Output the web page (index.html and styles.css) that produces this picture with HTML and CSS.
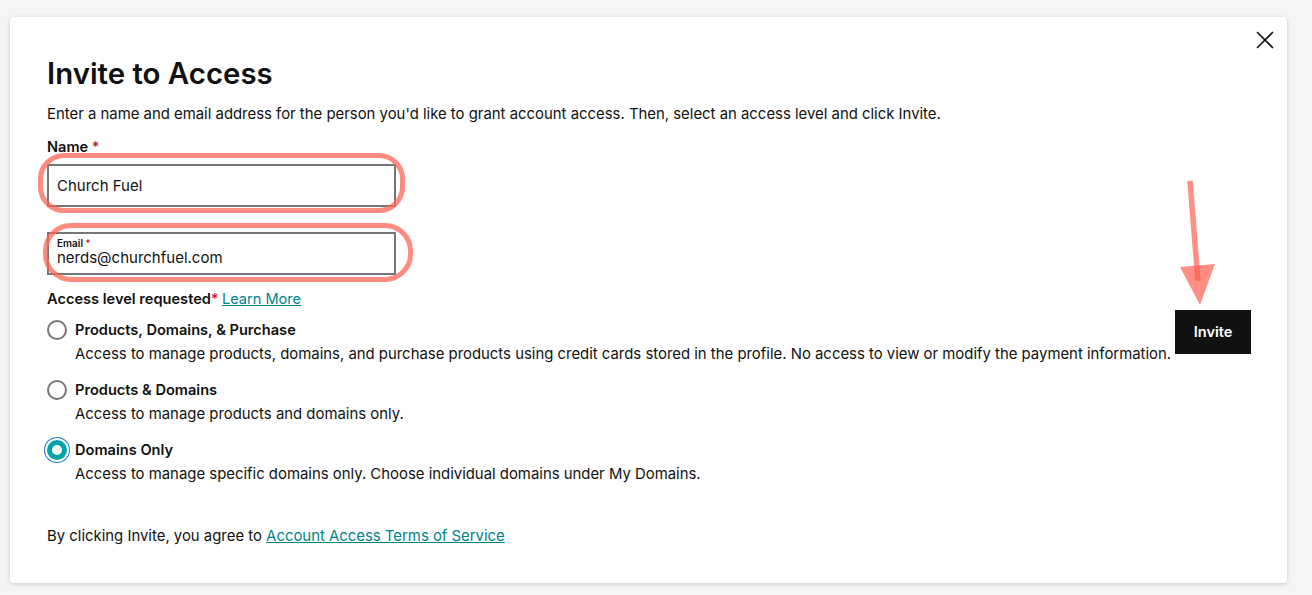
FILE: index.html
```html
<!DOCTYPE html>
<html>
<head>
<meta charset="utf-8">
<link rel="stylesheet" href="styles.css">
</head>
<body>
<div class="page">
  <div class="modal">
    <button class="close" aria-label="Close">
      <svg width="18" height="18" viewBox="0 0 18 18"><path d="M1 1L17 17M17 1L1 17" stroke="#111" stroke-width="1.6" fill="none"/></svg>
    </button>
    <h1 class="title">Invite to Access</h1>
    <p class="intro">Enter a name and email address for the person you'd like to grant account access. Then, select an access level and click Invite.</p>
    <div class="field-label">Name <span class="req">*</span></div>
    <div class="input-wrap">
      <div class="input"><span class="value">Church Fuel</span></div>
      <div class="oval oval-name"></div>
    </div>
    <div class="input-wrap email-wrap">
      <div class="input input-email">
        <span class="float-label">Email <span class="req">*</span></span>
        <span class="value">nerds@churchfuel.com</span>
      </div>
      <div class="oval oval-email"></div>
    </div>
    <div class="access-label">Access level requested<span class="req">*</span> <a class="link" href="#">Learn More</a></div>
    <div class="access-row">
      <div class="options">
        <div class="option">
          <span class="radio"></span>
          <div class="opt-text">
            <div class="opt-title">Products, Domains, &amp; Purchase</div>
            <div class="opt-desc">Access to manage products, domains, and purchase products using credit cards stored in the profile. No access to view or modify the payment information.</div>
          </div>
        </div>
        <div class="option">
          <span class="radio"></span>
          <div class="opt-text">
            <div class="opt-title">Products &amp; Domains</div>
            <div class="opt-desc">Access to manage products and domains only.</div>
          </div>
        </div>
        <div class="option">
          <span class="radio checked"></span>
          <div class="opt-text">
            <div class="opt-title">Domains Only</div>
            <div class="opt-desc">Access to manage specific domains only. Choose individual domains under My Domains.</div>
          </div>
        </div>
      </div>
      <div class="btn-col">
        <button class="invite">Invite</button>
        <svg class="arrow" width="50" height="130" viewBox="0 0 50 130"><line x1="10" y1="1" x2="18" y2="101" stroke="rgba(255,90,75,0.68)" stroke-width="5.5"/><polygon points="0,87 35,84 20,125" fill="rgba(255,90,75,0.68)"/></svg>
      </div>
    </div>
    <p class="terms">By clicking Invite, you agree to <a class="link" href="#">Account Access Terms of Service</a></p>
  </div>
</div>
</body>
</html>
```
FILE: styles.css
```css
* { box-sizing: border-box; }
html, body { margin: 0; padding: 0; }
body {
  background: #f5f5f5;
  font-family: "Inter", "Liberation Sans", sans-serif;
  color: #111;
  width: 1312px;
  height: 595px;
  overflow: hidden;
}
.page { padding: 17px 25px 0 10px; }
.modal {
  position: relative;
  background: #fff;
  border-radius: 4px;
  box-shadow: 0 1px 4px rgba(0,0,0,0.18);
  height: 566px;
  padding: 39px 37px 0 37px;
}
.close {
  position: absolute;
  top: 14px;
  right: 13px;
  background: none;
  border: 0;
  padding: 0;
  width: 18px;
  height: 18px;
}
.title {
  margin: 0;
  font-size: 29.4px;
  font-weight: 600;
  line-height: 36px;
}
.intro {
  margin: 12px 0 0;
  font-size: 14.9px;
  line-height: 20px;
}
.field-label {
  margin-top: 13px;
  font-size: 14.6px;
  font-weight: 600;
  line-height: 20px;
}
.req { color: #d0021b; font-weight: 400; }
.input-wrap { position: relative; width: 349px; margin-top: 7px; }
.email-wrap { margin-top: 25px; }
.input {
  height: 43px;
  border: 2px solid #767676;
  display: flex;
  flex-direction: column;
  justify-content: center;
  padding: 0 8px;
}
.value { font-size: 15px; line-height: 18px; }
.input-email { justify-content: flex-start; padding-top: 3px; }
.float-label { font-size: 10px; line-height: 12px; font-weight: 600; }
.oval {
  position: absolute;
  border: 5px solid rgba(255, 100, 85, 0.75);
  border-radius: 26px;
}
.oval-name { left: -9px; top: -11px; width: 367px; height: 60px; }
.oval-email { left: -4px; top: -9px; width: 370px; height: 59px; border-radius: 28px; }
.access-label { margin-top: 14px; font-size: 14.6px; font-weight: 600; line-height: 20px; }
.link { color: #00838c; text-decoration: underline; font-weight: 400; }
.access-row { display: flex; align-items: flex-start; }
.options { display: flex; flex-direction: column; gap: 16px; margin-top: 11px; flex: none; }
.option { display: flex; gap: 8px; }
.radio {
  width: 20px; height: 20px;
  border: 2px solid #767676;
  border-radius: 50%;
  flex: none;
}
.radio.checked {
  border: 5px solid #00a4a6;
  background: #fff;
  box-shadow: 0 0 0 2px #fff, 0 0 0 3px #1976d2;
}
.opt-title { font-size: 14.6px; font-weight: 600; line-height: 20px; }
.opt-desc { font-size: 14.9px; line-height: 20px; margin-top: 4px; white-space: nowrap; }
.btn-col { position: relative; margin-top: 1px; margin-left: 4px; flex: none; }
.invite {
  background: #111;
  color: #fff;
  border: 0;
  font-family: inherit;
  font-size: 14.6px;
  font-weight: 600;
  width: 76px;
  height: 44px;
  padding: 0;
}
.arrow { position: absolute; left: 5px; top: -130px; }
.terms { margin: 42px 0 0; font-size: 14.9px; line-height: 20px; }
```
